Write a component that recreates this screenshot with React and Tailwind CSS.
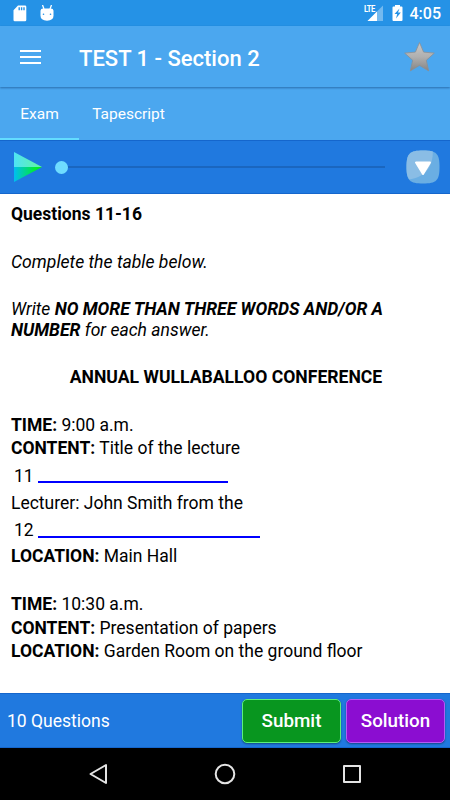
import { useState } from 'react';

const SdCardIcon = () => (
    <svg width="14" height="17" viewBox="0 0 14 17" fill="#fff">
        <path fillRule="evenodd" d="M5 .5h7A1.3 1.3 0 0 1 13.300 1.800V15a1.300 1.300 0 0 1-1.300 1.300H1.800A1.300 1.300 0 0 1 .500 15V5.200zM5.500 2.300v3h1.400v-3zM7.900 2.300v3h1.400v-3zM10.300 2.300v3h1.400v-3z" />
    </svg>
);

const DroidIcon = () => (
    <svg width="14" height="17" viewBox="0 0 14 17">
        <path d="M2.500 0L4 4M11.500 0L10 4" stroke="#fff" strokeWidth="1.300" />
        <path d="M3 3.500h8q2.300 0 2.500 2.300v5q0 4.700-6.500 4.900Q.500 15.500.500 10.800v-5Q.700 3.500 3 3.500z" fill="#fff" />
        <circle cx="3.500" cy="9.300" r=".8" fill="#2592e6" />
        <circle cx="10.500" cy="9.300" r=".8" fill="#2592e6" />
    </svg>
);

const SignalIcon = () => (
    <div className="relative h-[17px] w-[20px]">
        <svg width="20" height="17" viewBox="0 0 20 17">
            <path d="M19 .5V16H3.500z" fill="#73b9ef" />
            <path d="M13 6.500V16H3.500z" fill="#fff" />
        </svg>
        <span className="absolute left-0 top-0 h-[8px] w-[12px] origin-left scale-x-85 bg-[#2592e6] text-[9px] font-bold leading-[9px] tracking-[-0.6px]">LTE</span>
    </div>
);

const BatteryIcon = () => (
    <svg width="11" height="16" viewBox="0 0 11 16">
        <path d="M3 0h5v1.500h1.500a1 1 0 0 1 1 1V15a1 1 0 0 1-1 1h-8a1 1 0 0 1-1-1V2.500a1 1 0 0 1 1-1H3z" fill="#fff" />
        <path d="M7.500 3.500L2.500 9h2.700L4 13.500l4.800-6H6z" fill="#2592e6" />
    </svg>
);

const StarIcon = () => (
    <svg width="34" height="34" viewBox="0 0 34 34">
        <defs>
            <linearGradient id="star" x1="0" y1="0" x2="0" y2="1">
                <stop offset="0" stopColor="#c8c8c8" />
                <stop offset=".5" stopColor="#b0b0b0" />
                <stop offset="1" stopColor="#858585" />
            </linearGradient>
        </defs>
        <path d="M17.500 2.500l4.100 9.600 10.700 1-8 7.200 2.400 10.600-9.200-5.500-9.200 5.500 2.400-10.600-8-7.200 10.700-1z" fill="url(#star)" stroke="#8a8f94" strokeWidth=".8" strokeLinejoin="round" />
    </svg>
);

const PlayIcon = () => (
    <svg width="28" height="30" viewBox="0 0 28 30">
        <defs>
            <linearGradient id="playTop">
                <stop offset="0" stopColor="#4fe3f5" />
                <stop offset="1" stopColor="#62f5a0" />
            </linearGradient>
            <linearGradient id="playBottom">
                <stop offset="0" stopColor="#00bdf2" />
                <stop offset=".85" stopColor="#00f01c" />
            </linearGradient>
        </defs>
        <path d="M0 0l28 15H0z" fill="url(#playTop)" />
        <path d="M0 15h28L0 30z" fill="url(#playBottom)" />
    </svg>
);

const DropIcon = () => (
    <svg width="34" height="34" viewBox="0 0 34 34">
        <path d="M17 .5C30.500.500 33.500 3.500 33.500 17S30.500 33.500 17 33.500.500 30.500.500 17 3.500.500 17 .500z" fill="#6aaee3" />
        <path d="M17 .500c4.500 0 7.500.300 9.800 1.100C27 15 21 27 3.500 29.500 1.200 27.200.500 23.500.500 17 .500 3.500 3.500.500 17 .500z" fill="#8abde5" />
        <path d="M10 12.500h14L17 24z" fill="#fff" stroke="#fff" strokeWidth="2" strokeLinejoin="round" />
    </svg>
);

const Line = ({ label, text }) => (
    <p className="h-[23.700px] leading-[23.700px]"><b>{label}</b> {text}</p>
);

const App = () => {
    const [tab, setTab] = useState('Exam');

    return (
        <div className="flex h-[800px] w-[450px] flex-col overflow-hidden bg-white font-['Roboto',sans-serif] text-white">
            <div className="flex h-[26px] shrink-0 items-center bg-[#2592e6] pl-[13px] pr-[9px]">
                <SdCardIcon />
                <div className="ml-[13px]"><DroidIcon /></div>
                <div className="ml-auto"><SignalIcon /></div>
                <div className="ml-[8px]"><BatteryIcon /></div>
                <span className="ml-[7px] mt-[2px] text-[16px] font-medium leading-none">4:05</span>
            </div>

            <header className="z-10 flex h-[61px] shrink-0 items-center bg-[#4ba7ef] pl-[20px] pr-[14px] shadow-[0_1px_2px_rgba(0,40,90,0.45)]">
                <button className="flex w-[21px] flex-col gap-[4px]">
                    <span className="h-[2px] w-full bg-white"></span>
                    <span className="h-[2px] w-full bg-white"></span>
                    <span className="h-[2px] w-full bg-white"></span>
                </button>
                <h1 className="ml-[38px] mt-[3px] text-[22px] font-medium">TEST 1 - Section 2</h1>
                <button className="ml-auto"><StarIcon /></button>
            </header>

            <nav className="flex h-[53px] shrink-0 bg-[#4ba7ef] text-[15.500px]">
                <button
                    onClick={() => setTab('Exam')}
                    className={tab === 'Exam' ? 'w-[79px] border-b-2 border-[#63dcff] pt-[5px]' : 'w-[79px] pt-[3px]'}
                >
                    Exam
                </button>
                <button
                    onClick={() => setTab('Tapescript')}
                    className={tab === 'Tapescript' ? 'w-[99px] border-b-2 border-[#63dcff] pt-[5px]' : 'w-[99px] pt-[3px]'}
                >
                    Tapescript
                </button>
            </nav>

            <div className="flex h-[54px] shrink-0 items-center border-y border-[#1566cc] bg-[#2079df] pl-[14px] pr-[10px]">
                <PlayIcon />
                <div className="ml-[13px] flex flex-1 items-center">
                    <span className="size-[13px] rounded-full bg-[#6fdcff]"></span>
                    <span className="h-[2px] flex-1 bg-[#1a66bf]"></span>
                </div>
                <div className="ml-[21px]"><DropIcon /></div>
            </div>

            <main className="flex-1 px-[11px] pt-[10px] text-[17.500px] leading-[20.500px] text-black">
                <p><b>Questions 11-16</b></p>
                <p className="mt-[27px] text-[17.600px] italic">Complete the table below.</p>
                <p className="mt-[27px] text-[17.550px] italic">Write <b>NO MORE THAN THREE WORDS AND/OR A NUMBER</b> for each answer.</p>
                <p className="mt-[27px] pl-[2px] text-center text-[17.600px]"><b>ANNUAL WULLABALLOO CONFERENCE</b></p>
                <div className="mt-[26px]">
                    <Line label="TIME:" text="9:00 a.m." />
                    <Line label="CONTENT:" text="Title of the lecture" />
                    <div className="flex h-[30px] items-center pl-[3px]">
                        <span className="w-[21px]">11</span>
                        <span className="ml-[3px] mt-[13px] h-[2px] w-[190px] bg-[#0000ff]"></span>
                    </div>
                    <p className="h-[24px] leading-[24px]">Lecturer: John Smith from the</p>
                    <div className="flex h-[30.500px] items-center pl-[3px]">
                        <span className="w-[21px]">12</span>
                        <span className="ml-[3px] mt-[14px] h-[2.500px] w-[222px] bg-[#0000ff]"></span>
                    </div>
                    <Line label="LOCATION:" text="Main Hall" />
                </div>
                <div className="mt-[24px]">
                    <Line label="TIME:" text="10:30 a.m." />
                    <Line label="CONTENT:" text="Presentation of papers" />
                    <Line label="LOCATION:" text="Garden Room on the ground floor" />
                </div>
            </main>

            <footer className="flex h-[55px] shrink-0 items-center border-y border-[#1566cc] bg-[#2079df] pl-[7px] pr-[5px]">
                <span className="mt-[2px] text-[17.500px]">10 Questions</span>
                <button className="ml-auto h-[44px] w-[99px] rounded-[5px] border border-[#5cf07c] bg-[#08961f] pt-[2px] text-[18.800px] font-medium shadow-[0_1px_2px_rgba(0,0,0,0.4)]">Submit</button>
                <button className="ml-[5px] h-[44px] w-[99px] rounded-[5px] border border-[#b45cf5] bg-[#8b0dd1] pt-[2px] text-[18.800px] font-medium shadow-[0_1px_2px_rgba(0,0,0,0.4)]">Solution</button>
            </footer>

            <div className="flex h-[52px] shrink-0 items-center justify-between bg-black pl-[88px] pr-[88px]">
                <svg width="20" height="22" viewBox="0 0 20 22" fill="none" stroke="#e4e4e4" strokeWidth="2" strokeLinejoin="round">
                    <path d="M18 2v18L2.500 11z" />
                </svg>
                <svg width="22" height="22" viewBox="0 0 22 22" fill="none" stroke="#e4e4e4" strokeWidth="2">
                    <circle cx="11" cy="11" r="9.300" />
                </svg>
                <svg width="20" height="20" viewBox="0 0 20 20" fill="none" stroke="#e4e4e4" strokeWidth="2" strokeLinejoin="round">
                    <path d="M2 2h16v16H2z" />
                </svg>
            </div>
        </div>
    );
};

export default App;
